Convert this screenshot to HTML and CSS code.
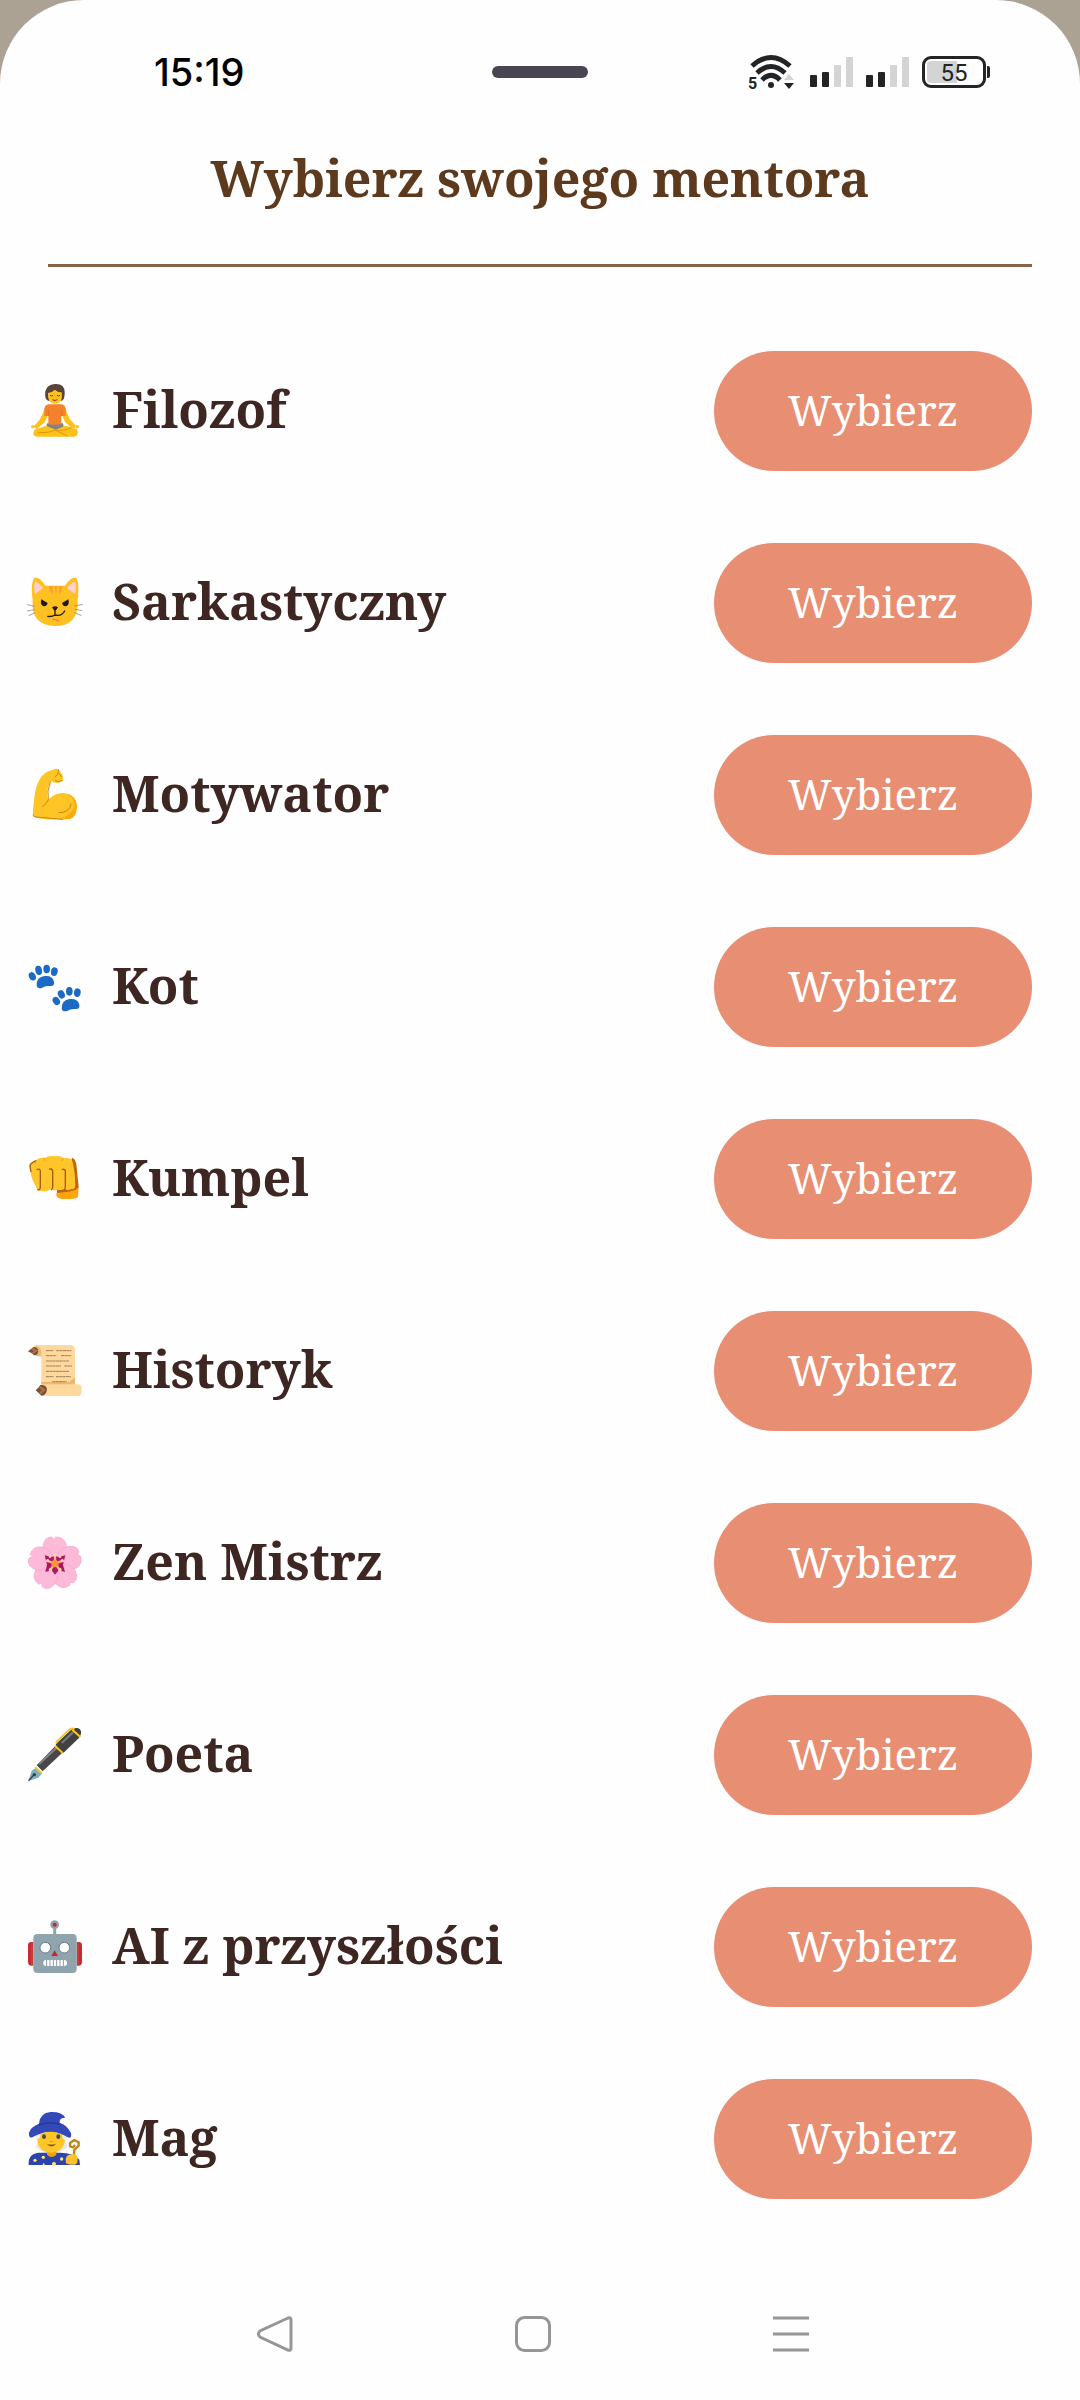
FILE: index.html
```html
<!DOCTYPE html>
<html lang="pl">
<head>
    <meta charset="UTF-8">
    <meta name="viewport" content="width=device-width, initial-scale=1.0">
    <title>Wybierz swojego mentora</title>
    <link rel="stylesheet" href="styles.css">
</head>
<body>
    <div class="screen">
        <div class="status-bar">
            <span class="clock">15:19</span>
            <span class="pill"></span>
            <div class="status-icons">
                <svg class="wifi" viewBox="0 0 52 40" aria-hidden="true">
                    <g fill="none" stroke="#222426" stroke-width="5">
                        <path d="M7 14Q26-3 45 14"/>
                        <path d="M12 21Q26 8 40 21"/>
                        <path d="M17 28Q26 19 35 28"/>
                    </g>
                    <circle cx="26" cy="33" r="3" fill="#222426"/>
                    <path d="M44 22l5 6H39z" fill="#d4d4d4"/>
                    <path d="M39 31h10l-5 6z" fill="#222426"/>
                    <text class="wifi-band" x="3" y="37">5</text>
                </svg>
                <svg class="signal" viewBox="0 0 43 32" aria-hidden="true">
                    <g fill="#222426"><rect y="19" width="7" height="12" rx="1"/><rect x="12" y="16" width="7" height="15" rx="1"/></g>
                    <g fill="#d4d4d4"><rect x="24" y="9" width="7" height="22" rx="1"/><rect x="36" y="1" width="7" height="30" rx="1"/></g>
                </svg>
                <svg class="signal" viewBox="0 0 43 32" aria-hidden="true">
                    <g fill="#222426"><rect y="19" width="7" height="12" rx="1"/><rect x="12" y="16" width="7" height="15" rx="1"/></g>
                    <g fill="#d4d4d4"><rect x="24" y="9" width="7" height="22" rx="1"/><rect x="36" y="1" width="7" height="30" rx="1"/></g>
                </svg>
                <div class="battery"><span class="battery-body">55</span><span class="battery-tip"></span></div>
            </div>
        </div>

        <header class="header">
            <h1>Wybierz swojego mentora</h1>
        </header>

        <ul class="mentors">
            <li class="mentor">
                <svg class="icon" viewBox="0 0 168 168" aria-hidden="true">
                    <path d="M55 71Q47 94 38 110L20 130l9 9 25-22 11-26zM113 71q8 23 17 39l18 20-9 9-25-22-11-26z" fill="#fcc21b"/>
                    <circle cx="17" cy="131" r="5" fill="#fcc21b"/><circle cx="151" cy="131" r="5" fill="#fcc21b"/>
                    <path d="M60 121h48l4 20H56z" fill="#858184"/>
                    <path d="M57 128l29 12 28-12 36 10q8 19-8 23H29q-17-5-6-21z" fill="#fcc21b"/>
                    <path d="M84 141q28 4 49-7M32 148q34 3 52-7l37 18" fill="none" stroke="#e59600" stroke-width="3"/>
                    <path d="M65 64h38q12 2 13 13v22h-13v23q-19 7-39 0V99H52V78q1-12 13-14z" fill="#f3822a"/>
                    <path d="M64 99V80M104 99V80" stroke="#db6b17" stroke-width="2"/>
                    <path d="M63 53q-11-3-8-28Q59 5 83 3q30-2 30 25 1 20-8 25z" fill="#5b433d"/>
                    <path d="M63 30q13-1 20-10 9 8 21 8 5 34-20 34Q60 60 63 30z" fill="#fcc21b"/>
                    <path d="M69 37q5 4 9 0M90 37q5 4 9 0M76 50q8 5 15 0" fill="none" stroke="#654232" stroke-width="3"/>
                </svg>
                <span class="name">Filozof</span>
                <button type="button" class="choose">Wybierz</button>
            </li>
            <li class="mentor">
                <svg class="icon" viewBox="0 0 168 168" aria-hidden="true">
                    <path d="M17 77Q10 20 23 8q15-2 32 24h59q17-26 33-24 11 12 5 69 3 76-68 76-72-2-67-76z" fill="#ffc022"/>
                    <path d="M24 58Q18 28 26 19q15 9 22 20zM144 58q6-30-2-39-12 8-22 20z" fill="#ffd0d3"/>
                    <path d="M66 34l12-1-1 23q-9-4-11-22zM83 33h8l-4 25zM96 33l11 2q-3 19-11 21z" fill="#ff9b38"/>
                    <path d="M43 73l19 11q-4 12-14 9-9-5-5-20zM124 73l-19 11q4 12 14 9 9-5 5-20zM75 97q9-6 18 0l-6 9h-6z" fill="#211b18"/>
                    <path d="M84 103v17q-9 6-22 4M84 120q20 5 29-12" fill="none" stroke="#211b18" stroke-width="4" stroke-linecap="round"/>
                    <path d="M76 132l20 5" stroke="#f36b24" stroke-width="3"/>
                    <path d="M1 89l22 5M0 108l23-4M5 122l20-9M167 88l-24 5M166 107l-23-4M164 122l-22-9" stroke="#7c7469" stroke-width="2"/>
                </svg>
                <span class="name">Sarkastyczny</span>
                <button type="button" class="choose">Wybierz</button>
            </li>
            <li class="mentor">
                <svg class="icon" viewBox="0 0 168 168" aria-hidden="true">
                    <path d="M21 149Q15 137 20 113 24 31 64 13L84 6q10-3 14 5l9 14q4 12-4 19-15 8-29-1-10 7-13 31-2 17 3 25 24-27 57-19 31 8 28 47-3 28-27 29-73 5-101-7z" fill="#ffc527"/>
                    <path d="M118 81q34 8 31 43-2 33-30 33l-22 1q41-17 45-43 2-22-24-34z" fill="#ffab10"/>
                    <path d="M46 118q6 0 18-19M64 99q-5-25 6-55M132 109q-2 28-37 28M84 41q12 6 23-1M95 7l-3 16-8 6m12-10l7 11M18 142q1 8 8 8l82 7" fill="none" stroke="#c68614" stroke-width="3"/>
                </svg>
                <span class="name">Motywator</span>
                <button type="button" class="choose">Wybierz</button>
            </li>
            <li class="mentor">
                <svg class="icon" viewBox="0 0 168 168" aria-hidden="true">
                    <g fill="#1b6ac5">
                        <path d="M29 79q-1-25 24-28 24-2 28 17 3 15-15 13-13-1-20 5-15 6-17-7z"/>
                        <ellipse cx="16" cy="52" rx="10" ry="13" transform="rotate(-30 16 52)"/>
                        <ellipse cx="35" cy="34" rx="10" ry="14" transform="rotate(-12 35 34)"/>
                        <ellipse cx="59" cy="30" rx="10" ry="13"/>
                        <ellipse cx="82" cy="38" rx="10" ry="13" transform="rotate(12 82 38)"/>
                        <path d="M104 149q-1-25 24-29 25-2 29 17 2 15-15 13-14 0-20 5-15 6-18-6z"/>
                        <ellipse cx="88" cy="126" rx="10" ry="13" transform="rotate(-35 88 126)"/>
                        <ellipse cx="103" cy="106" rx="10" ry="13" transform="rotate(-25 103 106)"/>
                        <ellipse cx="127" cy="97" rx="10" ry="13"/>
                        <ellipse cx="151" cy="101" rx="10" ry="13" transform="rotate(10 151 101)"/>
                    </g>
                </svg>
                <span class="name">Kot</span>
                <button type="button" class="choose">Wybierz</button>
            </li>
            <li class="mentor">
                <svg class="icon" viewBox="0 0 168 168" aria-hidden="true">
                    <path d="M88 126l67-19-2 31q-7 6-32 6-31 1-33-10z" fill="#ffa60d"/>
                    <path d="M136 20q12 6 13 29l6 59q-5 14-65 18V113z" fill="#bf650e"/>
                    <path d="M9 44q2-11 18-16 9-10 26-7 12-8 33-5 13-3 24 6 20-3 26 8 8 30 9 72 0 14-14 13-5 5-19-1-7 5-21 2-8 5-22-1-8 9-25 5-14-1-17-13Q8 76 9 44z" fill="#ffc52b"/>
                    <path d="M29 57q7-6 11 2v50q-1 9-9 7M66 55q8-4 11 4v50q0 6-5 8M104 56q9-4 11 4v48q-1 8-5 9M12 63L9 46q0-9 18-17" fill="none" stroke="#a65b0d" stroke-width="4"/>
                    <path d="M29 29q-6 3-4 8M54 21q-5 3-4 8M110 22q-6 2-5 8" fill="none" stroke="#e09b14" stroke-width="3"/>
                </svg>
                <span class="name">Kumpel</span>
                <button type="button" class="choose">Wybierz</button>
            </li>
            <li class="mentor">
                <svg class="icon" viewBox="0 0 168 168" aria-hidden="true">
                    <path d="M21 8q7-3 16-2h94q13 2 13 18v108H43V40L24 38z" fill="#ffd89e"/>
                    <path d="M25 10q14-2 18 14v17l-16-3z" fill="#eeb875"/>
                    <path d="M43 117h84l17-14v24H43z" fill="#efb76a"/>
                    <path d="M42 124h113q9 0 9 17t-9 18H44z" fill="#ffd89e"/>
                    <path d="M3 25l9-7 8-6q12 0 14 12-2 14-13 13l-7-6zM26 142l8-8 6-8q18-2 20 13-2 19-17 19l-8-8z" fill="#765039"/>
                    <path d="M15 17l12 6-11 8M38 132l13 9-12 10" fill="none" stroke="#a97144" stroke-width="7"/>
                    <path d="M57 23h22m9 0h45M57 38h31m14 0h31M57 54h69M57 69h45m10 0h23M57 85h70M57 101h23m7 0h45M76 116h43" stroke="#a17c54" stroke-width="3" stroke-dasharray="9 1"/>
                </svg>
                <span class="name">Historyk</span>
                <button type="button" class="choose">Wybierz</button>
            </li>
            <li class="mentor">
                <svg class="icon" viewBox="0 0 168 168" aria-hidden="true">
                    <defs><path id="petal" d="M84 85Q46 62 48 35 51 5 74 6l8 8 4-8q27-1 32 26 3 31-34 53z"/></defs>
                    <g fill="#fdb9d8" stroke="#f8a4cb" stroke-width="2">
                        <use href="#petal"/><use href="#petal" transform="rotate(72 84 85)"/>
                        <use href="#petal" transform="rotate(144 84 85)"/><use href="#petal" transform="rotate(216 84 85)"/>
                        <use href="#petal" transform="rotate(288 84 85)"/>
                    </g>
                    <path d="M84 119l-10-13-19 5 5-22-7-28 21 5 10-4 10 4 21-5-7 28 6 22-19-5z" fill="#ac166f"/>
                    <path d="M84 85V64m0 21l22-7m-22 7l13 18m-13-18l-13 18m13-18l-22-7" stroke="#ffb579" stroke-width="7"/>
                    <g fill="#ffd7a1"><circle cx="84" cy="61" r="5"/><circle cx="106" cy="77" r="5"/><circle cx="99" cy="104" r="5"/><circle cx="70" cy="104" r="5"/><circle cx="62" cy="77" r="5"/><circle cx="69" cy="65" r="4"/><circle cx="99" cy="65" r="4"/></g>
                    <circle cx="84" cy="86" r="11" fill="#f79342"/>
                </svg>
                <span class="name">Zen Mistrz</span>
                <button type="button" class="choose">Wybierz</button>
            </li>
            <li class="mentor">
                <svg class="icon" viewBox="0 0 168 168" aria-hidden="true">
                    <path d="M4 162L14 131l15-10 17 17-12 14z" fill="#82aebb"/>
                    <path d="M5 161l17-19" stroke="#29434e" stroke-width="4"/><circle cx="22" cy="143" r="5" fill="#29434e"/>
                    <path d="M29 115l59-61 23 19-64 60z" fill="#484848"/>
                    <path d="M36 111l56-52" stroke="#858585" stroke-width="6"/>
                    <path d="M86 52l48-45q14-8 25 0 8 12-4 27l-46 44z" fill="#414141"/>
                    <path d="M104 48l35-33" stroke="#777" stroke-width="7"/>
                    <path d="M24 121l20 18M84 57l24 22M136 8l24 22M87 49l4-7 37-35q8-5 15-1" fill="none" stroke="#f8c624" stroke-width="6"/>
                    <path d="M144 4q18-3 18 18z" fill="#364047"/>
                </svg>
                <span class="name">Poeta</span>
                <button type="button" class="choose">Wybierz</button>
            </li>
            <li class="mentor">
                <svg class="icon" viewBox="0 0 168 168" aria-hidden="true">
                    <path d="M83 26v24" stroke="#90a4ae" stroke-width="9"/>
                    <circle cx="83" cy="17" r="13" fill="#90a4ae"/><circle cx="83" cy="17" r="6" fill="#c62828"/>
                    <path d="M19 69H13q-10 0-10 10v49q0 12 11 12h5zM149 69h6q10 0 10 10v49q0 12-11 12h-5z" fill="#c62d32"/>
                    <path d="M15 71v67M153 71v67" stroke="#df5552" stroke-width="2"/>
                    <rect x="19" y="45" width="130" height="117" rx="12" fill="#90a4ae"/>
                    <g fill="#fff" stroke="#647985" stroke-width="3"><circle cx="55" cy="86" r="16"/><circle cx="112" cy="86" r="16"/></g>
                    <path d="M83 94l10 17H73z" fill="#c62828"/>
                    <rect x="49" y="123" width="71" height="18" rx="8" fill="#fff"/>
                    <path d="M59 123v18M69 123v18M79 123v18M89 123v18M99 123v18M109 123v18" stroke="#8b9ba3" stroke-width="3"/>
                </svg>
                <span class="name">AI z przyszłości</span>
                <button type="button" class="choose">Wybierz</button>
            </li>
            <li class="mentor">
                <svg class="icon" viewBox="0 0 168 168" aria-hidden="true">
                    <path d="M35 62q3 29-10 45 18 18 40 18h20q24-4 37-17-9-20-10-48z" fill="#e8e8ec"/>
                    <path d="M5 162q-3-33 30-37h62q40-1 60 21l2 16z" fill="#2d42ad"/>
                    <path d="M60 114h28v17q-14 14-28 0z" fill="#eea30c"/>
                    <path d="M31 72q0-24 41-24t42 24q3 51-42 53-46-2-41-53z" fill="#ffc626"/>
                    <path d="M38 64q5 6 0 17-10 9-13 3l2-22h18zM103 62h14l3 22q-5 8-13-3z" fill="#eee"/>
                    <ellipse cx="51" cy="77" rx="6" ry="7" fill="#514738"/><ellipse cx="94" cy="77" rx="6" ry="7" fill="#514738"/>
                    <path d="M43 66q7-6 14-2M87 64q7-4 15 2" fill="none" stroke="#fff2d3" stroke-width="5"/>
                    <path d="M67 90h12l-6 5z" fill="#f09a14"/><path d="M59 98q14 5 28 0-12 17-28 0z" fill="#815320"/>
                    <path d="M6 65Q12 47 36 38 38 6 71 3q35-1 44 17-19 0-17 15 22 6 34 31 3 19-10 13-50-34-106 0Q5 83 6 65z" fill="#3449b8"/>
                    <path d="M36 42q32-13 64-1" fill="none" stroke="#263994" stroke-width="5"/>
                    <path d="M141 132l1-15 13-13V94l-13-7-13 9v10l10 3 5-7" fill="none" stroke="#c18516" stroke-width="7" stroke-linejoin="round"/>
                    <path d="M117 157q-5-20 9-26l19-2q9 5 6 26-9 12-34 2z" fill="#ffc12c"/>
                    <g fill="#ffe967"><circle cx="24" cy="148" r="5"/><circle cx="49" cy="139" r="5"/><circle cx="81" cy="159" r="6"/><circle cx="104" cy="144" r="5"/><circle cx="50" cy="160" r="3"/></g>
                </svg>
                <span class="name">Mag</span>
                <button type="button" class="choose">Wybierz</button>
            </li>
        </ul>

        <nav class="nav-bar">
            <button type="button" aria-label="Wstecz">
                <svg viewBox="0 0 36 36"><path d="M31 2L3 15q-3 3 0 6l28 13q3 1 3-2V4q0-3-3-2z"/></svg>
            </button>
            <button type="button" aria-label="Ekran główny">
                <svg viewBox="0 0 36 36"><rect x="1.500" y="1.500" width="33" height="33" rx="8"/></svg>
            </button>
            <button type="button" aria-label="Ostatnie aplikacje">
                <svg viewBox="0 0 36 36"><path d="M0 2h36M0 18h36M0 34h36"/></svg>
            </button>
        </nav>
    </div>
</body>
</html>
```
FILE: styles.css
```css
* {
    box-sizing: border-box;
}
body {
    margin: 0;
    background-color: #aba294;
    color: #3e2723;
    font-family: "Noto Serif", "DejaVu Serif Condensed", "DejaVu Serif", serif;
}
.screen {
    display: flex;
    flex-direction: column;
    min-height: 100vh;
    background-color: #fefefe;
    border-radius: 84px 84px 0 0;
}
.status-bar {
    display: grid;
    grid-template-columns: 1fr auto 1fr;
    align-items: center;
    height: 144px;
    padding: 0 90px;
    font-family: Inter, sans-serif;
}
.clock {
    padding-left: 64px;
    color: #000;
    font-size: 38px;
    font-weight: 500;
}
.pill {
    width: 96px;
    height: 12px;
    border-radius: 6px;
    background-color: #494651;
}
.status-icons {
    display: flex;
    align-items: center;
    justify-content: flex-end;
    gap: 13px;
}
.wifi {
    width: 52px;
    height: 40px;
}
.wifi-band {
    font-family: Roboto, sans-serif;
    font-size: 16px;
    font-weight: 700;
    fill: #222426;
}
.signal {
    width: 43px;
    height: 32px;
}
.battery {
    display: flex;
    align-items: center;
    gap: 1px;
}
.battery-body {
    width: 64px;
    height: 32px;
    border: 3px solid #222426;
    border-radius: 9px;
    background: linear-gradient(to right, #d4d4d4 55%, transparent 55%) content-box;
    padding: 2px;
    color: #222426;
    font-family: Roboto, sans-serif;
    font-size: 24px;
    line-height: 24px;
    text-align: center;
}
.battery-tip {
    width: 3px;
    height: 12px;
    border-radius: 0 2px 2px 0;
    background-color: #222426;
}
.header {
    margin: 0 48px;
    border-bottom: 3px solid #86654a;
    padding-bottom: 52px;
}
.header h1 {
    margin: 0;
    color: #5d3a1e;
    font-size: 50px;
    line-height: 68px;
    text-align: center;
}
.mentors {
    list-style: none;
    margin: 0;
    padding: 48px 48px 0 27px;
}
.mentor {
    display: flex;
    align-items: center;
    gap: 29px;
    height: 192px;
}
.icon {
    flex: none;
    width: 56px;
    height: 56px;
}
.name {
    flex: 1;
    padding-bottom: 4px;
    font-size: 50px;
    font-weight: 700;
    line-height: 68px;
}
.choose {
    width: 318px;
    height: 120px;
    border: 0;
    border-radius: 60px;
    padding: 0 0 4px;
    background-color: #e78e73;
    color: #fff;
    font-family: inherit;
    font-size: 42px;
}
.nav-bar {
    display: flex;
    justify-content: center;
    gap: 186px;
    margin-top: auto;
    padding: 30px 14px 30px 0;
}
.nav-bar button {
    width: 72px;
    height: 72px;
    border: 0;
    padding: 18px;
    background: none;
}
.nav-bar svg {
    display: block;
    width: 36px;
    height: 36px;
    fill: none;
    stroke: #969696;
    stroke-width: 3;
}
```
